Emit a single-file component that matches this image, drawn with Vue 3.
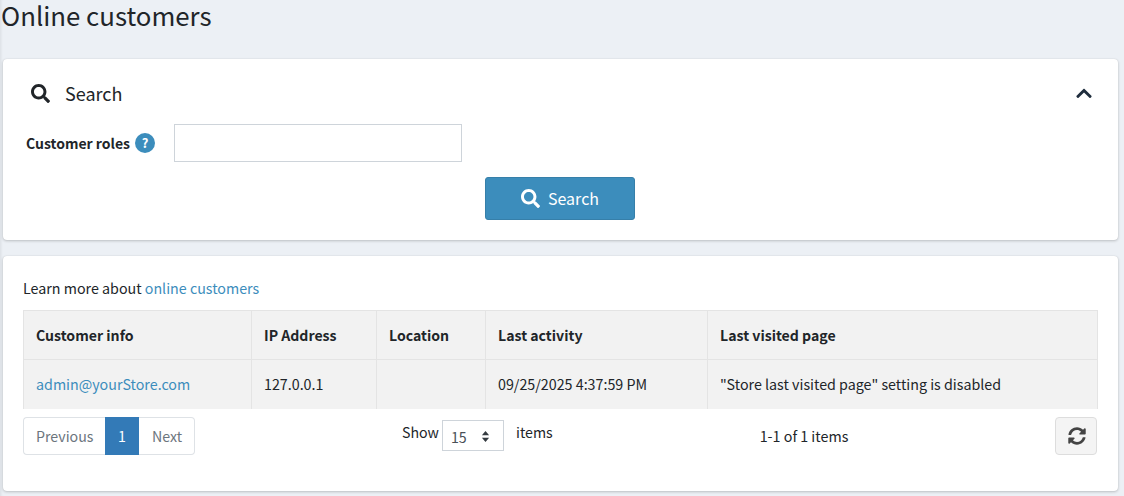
<script setup>
import { ref } from 'vue'

const columns = ['Customer info', 'IP Address', 'Location', 'Last activity', 'Last visited page']
const pageSize = ref('15')
</script>

<template>
  <div class="page">
    <h1 class="title">Online customers</h1>

    <section class="card search-card">
      <div class="search-head">
        <svg class="head-icon" viewBox="0 0 512 512"><path d="M505 442.700L405.300 343c-4.500-4.500-10.600-7-17-7H372c27.600-35.300 44-79.700 44-128C416 93.100 322.900 0 208 0S0 93.100 0 208s93.100 208 208 208c48.300 0 92.700-16.400 128-44v16.300c0 6.400 2.500 12.500 7 17l99.700 99.700c9.400 9.400 24.600 9.400 33.900 0l28.300-28.300c9.400-9.400 9.400-24.600.1-34zM208 336c-70.700 0-128-57.200-128-128 0-70.700 57.200-128 128-128 70.700 0 128 57.200 128 128 0 70.700-57.200 128-128 128z"/></svg>
        <span class="head-text">Search</span>
        <svg class="chevron" viewBox="0 0 448 512"><path d="M240.500 143l194 194c9.400 9.400 9.400 24.600 0 33.900l-22.600 22.600c-9.400 9.400-24.600 9.400-33.900 0L224 239.500 70 393.500c-9.400 9.400-24.600 9.400-33.900 0L13.500 370.900c-9.400-9.400-9.400-24.600 0-33.900l194-194c9.400-9.400 24.600-9.400 33 0z"/></svg>
      </div>
      <div class="role-row">
        <label class="role-label">Customer roles</label>
        <span class="hint">?</span>
        <input class="role-input" type="text" />
      </div>
      <div class="btn-row">
        <button class="search-btn">
          <svg class="btn-icon" viewBox="0 0 512 512"><path d="M505 442.700L405.300 343c-4.500-4.500-10.600-7-17-7H372c27.600-35.300 44-79.700 44-128C416 93.100 322.900 0 208 0S0 93.100 0 208s93.100 208 208 208c48.300 0 92.700-16.400 128-44v16.300c0 6.400 2.500 12.500 7 17l99.700 99.700c9.400 9.400 24.600 9.400 33.900 0l28.300-28.300c9.400-9.400 9.400-24.600.1-34zM208 336c-70.700 0-128-57.200-128-128 0-70.700 57.200-128 128-128 70.700 0 128 57.200 128 128 0 70.700-57.200 128-128 128z"/></svg>
          <span class="btn-text">Search</span>
        </button>
      </div>
    </section>

    <section class="card list-card">
      <p class="learn">Learn more about <a href="#" class="link">online customers</a></p>
      <table class="grid">
        <colgroup>
          <col style="width: 228px" />
          <col style="width: 125px" />
          <col style="width: 109px" />
          <col style="width: 222px" />
          <col />
        </colgroup>
        <thead>
          <tr>
            <th v-for="c in columns" :key="c">{{ c }}</th>
          </tr>
        </thead>
        <tbody>
          <tr>
            <td><a href="#" class="link">admin@yourStore.com</a></td>
            <td>127.0.0.1</td>
            <td></td>
            <td>09/25/2025 4:37:59 PM</td>
            <td>"Store last visited page" setting is disabled</td>
          </tr>
        </tbody>
      </table>
      <div class="pager">
        <div class="pages">
          <span class="page-item first">Previous</span>
          <span class="page-item active">1</span>
          <span class="page-item last">Next</span>
        </div>
        <div class="size">
          <span class="size-show">Show</span>
          <span class="size-select">
            {{ pageSize }}
            <svg class="updown" viewBox="0 0 10 14"><path d="M5 1l4 4.500H1zM5 13L1 8.500h8z"/></svg>
          </span>
          <span class="size-items">items</span>
        </div>
        <div class="count">1-1 of 1 items</div>
        <button class="refresh">
          <svg viewBox="0 0 512 512"><path d="M370.720 133.280C339.458 104.008 298.888 87.962 255.848 88c-77.458.068-144.328 53.178-162.791 126.850-1.344 5.363-6.122 9.150-11.651 9.150H24.103c-7.498 0-13.194-6.807-11.807-14.176C33.933 94.924 134.813 8 256 8c66.448 0 126.791 26.136 171.315 68.685L463.030 40.970C478.149 25.851 504 36.559 504 57.941V192c0 13.255-10.745 24-24 24H345.941c-21.382 0-32.090-25.851-16.971-40.971l41.750-41.749zM32 296h134.059c21.382 0 32.090 25.851 16.971 40.971l-41.750 41.750c31.262 29.273 71.835 45.319 114.876 45.280 77.418-.070 144.315-53.144 162.787-126.849 1.344-5.363 6.122-9.150 11.651-9.150h57.304c7.498 0 13.194 6.807 11.807 14.176C478.067 417.076 377.187 504 256 504c-66.448 0-126.791-26.136-171.315-68.685L48.970 471.030C33.851 486.149 8 475.441 8 454.059V320c0-13.255 10.745-24 24-24z"/></svg>
        </button>
      </div>
    </section>
  </div>
</template>

<style>
body {
  margin: 0;
  background: #ecf0f5;
}
</style>

<style scoped>
.page {
  font-family: "Noto Sans CJK SC", "Noto Sans", sans-serif;
  font-size: 16px;
  line-height: 24px;
  color: #212529;
  height: 496px;
  overflow: hidden;
  padding: 0 6px 0 3px;
  box-sizing: border-box;
  box-shadow: inset 3px 0 3px -2px rgba(0, 0, 0, .08);
}
.title {
  margin: 0 0 0 -2px;
  height: 59px;
  font-size: 25.8px;
  font-weight: 400;
  line-height: 30px;
}
.card {
  background: #fff;
  border-radius: 4px;
  box-shadow: 0 0 1px rgba(0, 0, 0, .125), 0 1px 3px rgba(0, 0, 0, .2);
}
.search-card {
  height: 181px;
  padding: 22px 25px 0 28px;
  box-sizing: border-box;
  margin-bottom: 16px;
}
.search-head {
  display: flex;
  align-items: center;
  height: 24px;
}
.head-icon {
  width: 19px;
  height: 19px;
  margin-top: 1px;
  fill: #212529;
}
.head-text {
  margin-left: 15px;
  font-size: 18px;
}
.chevron {
  width: 16px;
  height: 18px;
  margin-left: auto;
  margin-right: 1px;
  fill: #1f2d3d;
}
.role-row {
  display: flex;
  align-items: center;
  margin-top: 19px;
  margin-left: -5px;
}
.role-label {
  font-weight: 700;
  font-size: 14px;
  width: 104px;
  white-space: nowrap;
}
.hint {
  width: 20px;
  height: 20px;
  margin-left: 5px;
  border-radius: 50%;
  background: #3c8dbc;
  color: #fff;
  font-size: 13px;
  font-weight: 700;
  line-height: 20px;
  text-align: center;
}
.role-input {
  width: 288px;
  height: 38px;
  margin-left: 19px;
  padding: 0 12px;
  border: 1px solid #ced4da;
  box-sizing: border-box;
  background: #fff;
}
.btn-row {
  display: flex;
  margin-top: 15px;
  padding-left: 454px;
}
.search-btn {
  display: flex;
  align-items: center;
  justify-content: center;
  gap: 8px;
  width: 150px;
  height: 43px;
  border: 1px solid #367fa9;
  border-radius: 3px;
  background: #3c8dbc;
  color: #fff;
  font: inherit;
  font-size: 16px;
}
.btn-text {
  margin-top: -2px;
}
.btn-icon {
  width: 19px;
  height: 19px;
  fill: #fff;
}
.list-card {
  height: 235px;
  padding: 20px 20px 0;
  box-sizing: border-box;
}
.learn {
  margin: 0 0 9px;
  height: 25px;
  font-size: 14.27px;
}
.link {
  color: #3c8dbc;
  text-decoration: none;
}
.grid {
  width: 1075px;
  border-collapse: collapse;
  table-layout: fixed;
  background: #f2f2f2;
  font-size: 14.27px;
}
.grid th,
.grid td {
  height: 49px;
  padding: 0 12px;
  border: 1px solid #e4e4e4;
  border-bottom: 0;
  text-align: left;
  box-sizing: border-box;
}
.grid th {
  font-size: 14.1px;
  font-weight: 700;
  border-bottom: 1px solid #e4e4e4;
}
.pager {
  position: relative;
  display: flex;
  align-items: flex-start;
  margin-top: 8px;
  font-size: 14.2px;
}
.pages {
  display: flex;
  height: 38px;
}
.page-item {
  display: flex;
  align-items: center;
  padding: 0 12px;
  border: 1px solid #dee2e6;
  color: #6c757d;
  box-sizing: border-box;
}
.page-item.first {
  width: 82px;
  border-right: 0;
  border-radius: 4px 0 0 4px;
}
.page-item.active {
  width: 34px;
  justify-content: center;
  background: #337ab7;
  border-color: #337ab7;
  color: #fff;
}
.page-item.last {
  width: 56px;
  padding-left: 13px;
  border-left: 0;
  border-radius: 0 4px 4px 0;
}
.size {
  display: flex;
  align-items: flex-start;
  margin-left: 207px;
  margin-top: 3px;
}
.size-select {
  display: flex;
  align-items: center;
  justify-content: space-between;
  width: 62px;
  height: 31px;
  margin-left: 3px;
  padding: 3px 13px 0 8px;
  border: 1px solid #ced4da;
  box-sizing: border-box;
  color: #495057;
}
.updown {
  width: 9px;
  height: 13px;
  fill: #343a40;
}
.size-items {
  margin-left: 12px;
}
.count {
  margin-left: 207px;
  margin-top: 7px;
  font-size: 14.3px;
}
.refresh {
  display: flex;
  align-items: center;
  justify-content: center;
  width: 42px;
  height: 38px;
  margin-left: auto;
  margin-right: 1px;
  padding: 0 0 0 1px;
  border: 1px solid #ddd;
  border-radius: 4px;
  background: #f4f4f4;
}
.refresh svg {
  width: 18px;
  height: 18px;
  fill: #444;
}
</style>
